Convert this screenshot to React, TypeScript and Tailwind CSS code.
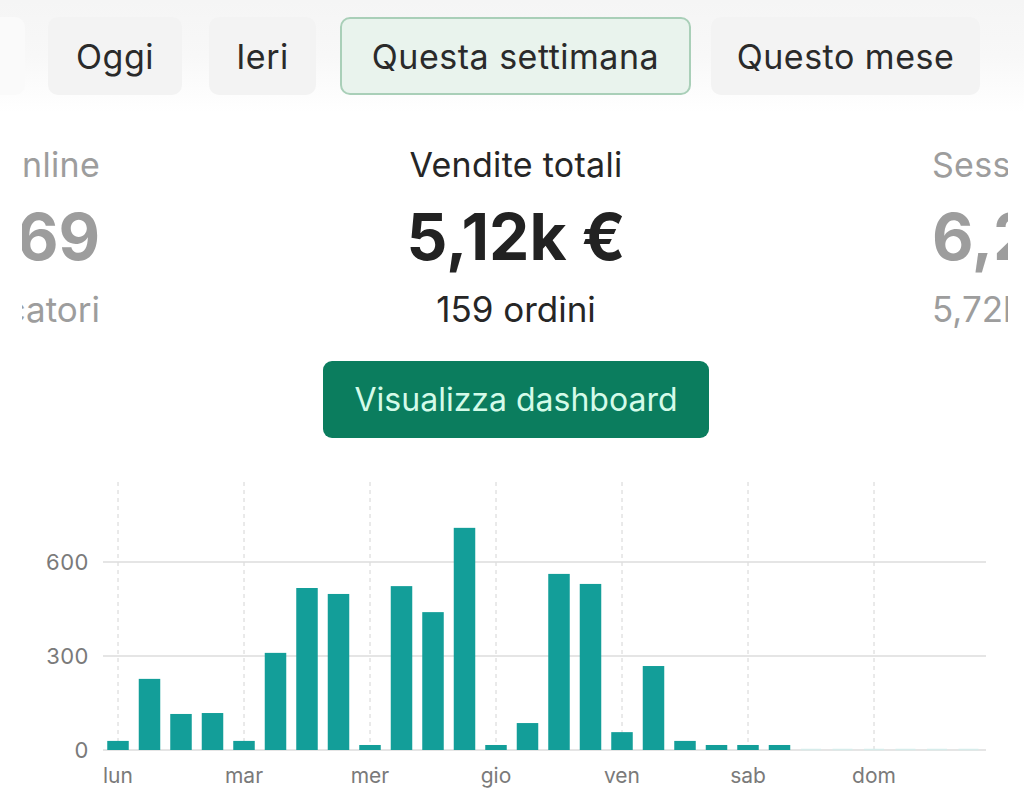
import React from "react";

const values = [
  29, 227, 115, 118, 29, 310, 517, 498, 16, 523, 440, 709, 16, 86, 562, 530,
  57, 268, 29, 16, 16, 16, 0, 0, 0, 0, 0, 0,
];
const days = ["lun", "mar", "mer", "gio", "ven", "sab", "dom"];

function Chart() {
  const y0 = 280; // baseline in svg coords (page y 750 - 470)
  const scale = 94 / 300;
  const x0 = 118;
  const step = 31.5;
  return (
    <svg width="1024" height="324" viewBox="0 0 1024 324" className="block">
      {days.map((d, i) => (
        <line
          key={"v" + d}
          x1={x0 + i * 126}
          x2={x0 + i * 126}
          y1={12}
          y2={y0}
          stroke="#d4d4d4"
          strokeWidth="1"
          strokeDasharray="4 4"
        />
      ))}
      {[600, 300, 0].map((v) => (
        <line
          key={"h" + v}
          x1={103}
          x2={986}
          y1={y0 - v * scale}
          y2={y0 - v * scale}
          stroke="#dcdcdc"
          strokeWidth="1.5"
        />
      ))}
      {[600, 300, 0].map((v) => (
        <text
          key={"t" + v}
          x={89}
          y={y0 - v * scale + 8}
          textAnchor="end"
          fontSize="22"
          letterSpacing="0.5"
          fill="#7a7a7a"
          fontFamily="Inter, 'Noto Sans', sans-serif"
        >
          {v}
        </text>
      ))}
      {values.map((v, i) => {
        const cx = x0 + i * step;
        if (v === 0) {
          return (
            <line
              key={"b" + i}
              x1={cx - 10}
              x2={cx + 10}
              y1={y0 - 0.5}
              y2={y0 - 0.5}
              stroke="#d6eceb"
              strokeWidth="1.5"
            />
          );
        }
        const h = v * scale;
        return (
          <rect
            key={"b" + i}
            x={cx - 10.75}
            y={y0 - h}
            width={21.5}
            height={h}
            fill="#139e99"
          />
        );
      })}
      {days.map((d, i) => (
        <text
          key={"l" + d}
          x={x0 + i * 126}
          y={313}
          textAnchor="middle"
          fontSize="21"
          fill="#7a7a7a"
          fontFamily="Inter, 'Noto Sans', sans-serif"
        >
          {d}
        </text>
      ))}
    </svg>
  );
}

export default function App() {
  const tab =
    "h-[78px] flex items-center justify-center rounded-[10px] text-[34px] tracking-[0.5px] text-[#2a2a2a] whitespace-nowrap";
  return (
    <div
      className="w-[1024px] h-[794px] overflow-hidden bg-white"
      style={{ fontFamily: "Inter, 'Noto Sans', sans-serif" }}
    >
      <div className="h-[112px] bg-linear-to-b from-[#f5f5f5] via-[#f8f8f8] to-white pt-[17px] flex">
        <div className="w-[25px] h-[78px] bg-[#fafafa] rounded-r-[10px]" />
        <div className="flex gap-[26px] ml-[23px]">
          <div className={tab + " w-[134px] bg-[#f3f3f3]"}>Oggi</div>
          <div className={tab + " w-[107px] bg-[#f3f3f3] ml-[1px]"}>Ieri</div>
          <div
            className={
              tab +
              " w-[351px] bg-[#e9f3ed] border-2 border-[#a9cfb8] -ml-[2px]"
            }
          >
            Questa settimana
          </div>
          <div className={tab + " w-[269px] bg-[#f3f3f3] -ml-[6px]"}>
            Questo mese
          </div>
        </div>
      </div>

      <div className="ml-[22px] mr-[16px] grid grid-cols-[78px_1fr_76px] -mt-[2px]">
        <div className="overflow-hidden flex flex-col items-end text-[#9d9d9d] whitespace-nowrap">
          <div className="h-[48px] text-[34px] tracking-[0.3px] leading-[48px] mt-[31px]">Visitatori online</div>
          <div className="h-[96px] text-[64px] font-bold leading-[96px]">269</div>
          <div className="h-[48px] text-[35px] leading-[48px]">Indicatori</div>
        </div>
        <div className="flex flex-col items-center text-[#262626]">
          <div className="h-[48px] text-[34px] tracking-[0.3px] leading-[48px] mt-[31px]">Vendite totali</div>
          <div className="h-[96px] text-[64px] font-bold leading-[96px] text-[#222]">
            5,12k €
          </div>
          <div className="h-[48px] text-[35px] leading-[48px]">159 ordini</div>
          <button className="mt-[28px] w-[386px] h-[77px] rounded-[9px] bg-[#0b7d5e] text-[#d4fbe9] text-[32px] flex items-center justify-center">
            Visualizza dashboard
          </button>
        </div>
        <div className="overflow-hidden flex flex-col items-start text-[#9d9d9d] whitespace-nowrap">
          <div className="h-[48px] text-[34px] tracking-[0.3px] leading-[48px] mt-[31px]">Sessioni</div>
          <div className="h-[96px] text-[64px] font-bold leading-[96px]">6,2k</div>
          <div className="h-[48px] text-[35px] leading-[48px]">5,72k visitatori</div>
        </div>
      </div>

      <div className="mt-[32px]">
        <Chart />
      </div>
    </div>
  );
}
